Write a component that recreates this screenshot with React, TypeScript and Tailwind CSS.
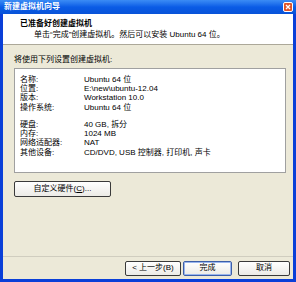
const cjk = "font-['Liberation_Sans','Noto_Sans_CJK_SC',sans-serif]";

const rows: [string, string][] = [
  ["名称:", "Ubuntu 64 位"],
  ["位置:", "E:\\new\\ubuntu-12.04"],
  ["版本:", "Workstation 10.0"],
  ["操作系统:", "Ubuntu 64 位"],
];

const rows2: [string, string][] = [
  ["硬盘:", "40 GB, 拆分"],
  ["内存:", "1024 MB"],
  ["网络适配器:", "NAT"],
  ["其他设备:", "CD/DVD, USB 控制器, 打印机, 声卡"],
];

function XpButton({ label, className = "", focused = false }: { label: React.ReactNode; className?: string; focused?: boolean }) {
  return (
    <div
      className={`flex items-center justify-center h-[15px] rounded-[2px] border ${
        focused ? "border-[#3c5ea8] shadow-[inset_0_0_0_1px_#9ab6ee]" : "border-[#3a3a3a]"
      } bg-gradient-to-b from-white to-[#ecebe6] text-[8px] text-black ${className}`}
    >
      {label}
    </div>
  );
}

function Rows({ data }: { data: [string, string][] }) {
  return (
    <div className="flex flex-col">
      {data.map(([k, v]) => (
        <div key={k} className="flex h-[9.3px] items-center leading-none">
          <span className="w-[64px] shrink-0">{k}</span>
          <span>{v}</span>
        </div>
      ))}
    </div>
  );
}

export default function App() {
  return (
    <div className={`w-[296px] h-[282px] flex flex-col bg-[#0a3fd8] ${cjk} text-[8px] text-black overflow-hidden`}>
      {/* Title bar */}
      <div className="h-[14px] shrink-0 flex items-center justify-between pl-[4px] pr-[3px] bg-gradient-to-b from-[#3b8cf5] via-[#0a5ce6] to-[#0852d8]">
        <span className="text-white font-bold text-[8px] leading-none">新建虚拟机向导</span>
        <div className="w-[10px] h-[10px] rounded-[2px] border border-white bg-[#e0542a] flex items-center justify-center">
          <svg width="6" height="6" viewBox="0 0 6 6">
            <path d="M1 1L5 5M5 1L1 5" stroke="white" strokeWidth="1.3" />
          </svg>
        </div>
      </div>

      <div className="flex-1 mx-[3px] mb-[3px] flex flex-col bg-[#ece9d8]">
        {/* Header */}
        <div className="h-[31px] shrink-0 bg-white border-b border-[#aca899] flex flex-col pl-[17px] pt-[5px]">
          <span className="font-bold leading-none h-[10px] flex items-center">已准备好创建虚拟机</span>
          <span className="leading-none h-[12px] flex items-center pl-[14px]">
            单击“完成”创建虚拟机。然后可以安装 Ubuntu 64 位。
          </span>
        </div>

        {/* Body */}
        <div className="flex-1 flex flex-col px-[11px] pr-[7px] pt-[10px]">
          <span className="leading-none h-[10px] flex items-center">将使用下列设置创建虚拟机:</span>
          <div className="mt-[3px] h-[105px] bg-white border border-[#a0a0a0] pl-[5px] pt-[6px] flex flex-col gap-[8px]">
            <Rows data={rows} />
            <Rows data={rows2} />
          </div>
          <XpButton label={<span>自定义硬件(<u>C</u>)...</span>} className="mt-[8px] w-[97px] h-[16px]" />
        </div>

        {/* Footer */}
        <div className="h-[23px] shrink-0 border-t border-[#d0cdbf] flex items-center justify-end pr-[3px] gap-[2px]">
          <XpButton label="< 上一步(B)" className="w-[56px]" />
          <XpButton label="完成" className="w-[49px]" focused />
          <XpButton label="取消" className="w-[52px] ml-[4px]" />
        </div>
      </div>
    </div>
  );
}
